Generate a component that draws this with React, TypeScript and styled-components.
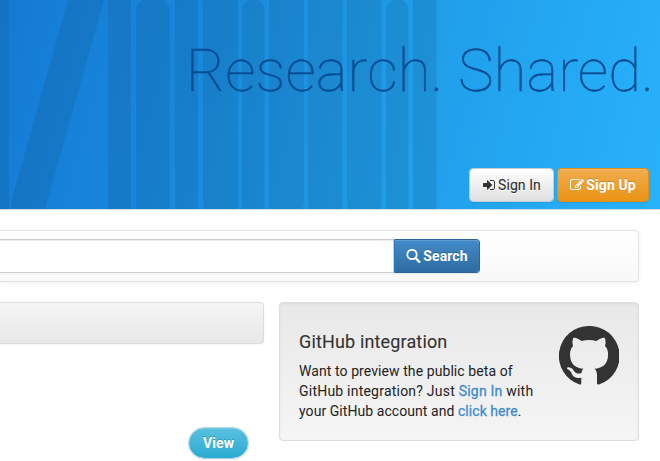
import React from "react";
import styled, { createGlobalStyle, css } from "styled-components";

const GlobalStyle = createGlobalStyle`
  * { box-sizing: border-box; }
  html, body { margin: 0; padding: 0; background: #fff; overflow: hidden; }
  body {
    font-family: Roboto, "Liberation Sans", sans-serif;
    font-size: 14px;
    line-height: 20px;
    color: #222;
  }
`;

const Page = styled.div`
  width: 660px;
  height: 461px;
  overflow: hidden;
  background: #fff;
`;

const Hero = styled.header`
  position: relative;
  height: 210px;
  padding: 37px 11px 0 0;
  display: flex;
  flex-direction: column;
  align-items: flex-end;
  border-bottom: 1px solid #d5dde3;
  background: linear-gradient(105deg, #147ad5 0%, #1887da 28%, #209eea 62%, #28b2fb 100%) padding-box;
`;

const Backdrop = styled.svg`
  position: absolute;
  left: 0;
  top: 0;
  width: 660px;
  height: 209px;
  fill: #104f70;
  fill-opacity: 0.17;
`;

const Slogan = styled.h1`
  position: relative;
  margin: 0 -5px 0 0;
  font-size: 60px;
  font-weight: 100;
  line-height: 68px;
  height: 131px;
  letter-spacing: 0.08px;
  white-space: nowrap;
  color: #004c91;
  -webkit-text-stroke: 0.4px #004c91;
`;

const HeroActions = styled.div`
  position: relative;
  display: flex;
  gap: 3px;
`;

const tones = {
  plain: css`
    color: #333;
    border-color: #c6cdd2;
    background: linear-gradient(#fff, #e0e0e0) padding-box;
    text-shadow: 0 1px 0 #fff;
    -webkit-text-stroke: 0.1px #333;
  `,
  orange: css`
    color: #fff;
    border-color: #e38d13;
    background: linear-gradient(#f0ad4e, #eb9316) padding-box;
    text-shadow: 0 -1px 0 rgba(0, 0, 0, 0.2);
  `,
  blue: css`
    color: #fff;
    border-color: #2b669a;
    border-left-color: #3577b1;
    background: linear-gradient(#428bca, #2d6ca2) padding-box;
    text-shadow: 0 -1px 0 rgba(0, 0, 0, 0.2);
  `,
  cyan: css`
    color: #fff;
    border-color: #b5d5df;
    background: linear-gradient(#5bc0de, #2aabd2) padding-box;
    text-shadow: 0 -1px 0 rgba(0, 0, 0, 0.2);
  `,
};

const Button = styled.button<{ $tone: keyof typeof tones; $width: number; $radius?: string; $bold?: boolean; $height?: number }>`
  display: flex;
  align-items: center;
  justify-content: center;
  gap: 2px;
  width: ${(p) => p.$width}px;
  height: ${(p) => p.$height ?? 34}px;
  padding: 0;
  border: 1px solid;
  border-radius: ${(p) => p.$radius ?? "4px"};
  font: ${(p) => (p.$bold ? 700 : 400)} 14px/20px Roboto, sans-serif;
  letter-spacing: 0.08px;
  white-space: nowrap;
  box-shadow: inset 0 1px 0 rgba(255, 255, 255, 0.15), 0 1px 1px rgba(0, 0, 0, 0.075);
  ${(p) => tones[p.$tone]}
`;

const Glyph = styled.svg<{ $size: number }>`
  width: ${(p) => p.$size}px;
  height: ${(p) => p.$size}px;
  flex: none;
  fill: currentColor;
`;

const SearchPanel = styled.section`
  width: 639px;
  height: 52px;
  margin-top: 20px;
  padding: 8px 0;
  display: flex;
  border: 1px solid #e5e5e5;
  border-left: 0;
  border-radius: 0 4px 4px 0;
  background: linear-gradient(#fff, #f8f8f8);
  box-shadow: 0 1px 4px rgba(0, 0, 0, 0.065);
`;

const SearchInput = styled.input`
  width: 394px;
  height: 34px;
  padding: 0;
  border: solid #ccc;
  border-width: 1px 1px 1px 0;
  background: #fff;
  box-shadow: inset 0 1px 1px rgba(0, 0, 0, 0.075);
`;

const Columns = styled.main`
  display: grid;
  grid-template-columns: 264px 360px;
  gap: 15px;
  margin-top: 20px;
`;

const Listing = styled.section`
  display: flex;
  flex-direction: column;
  align-items: flex-end;
  justify-content: space-between;
  height: 157px;
`;

const ListingHeader = styled.div`
  width: 264px;
  height: 42px;
  border: 1px solid #dcdcdc;
  border-left: 0;
  border-radius: 0 4px 4px 0;
  background: linear-gradient(#f5f5f5, #e8e8e8);
  box-shadow: 0 1px 2px rgba(0, 0, 0, 0.05);
`;

const ListingFooter = styled.div`
  padding-right: 15px;
`;

const Well = styled.aside`
  display: flex;
  justify-content: space-between;
  height: 139px;
  padding: 23px 19px 0;
  border: 1px solid #dcdcdc;
  border-radius: 4px;
  background: linear-gradient(#e8e8e8, #f5f5f5);
  box-shadow: inset 0 1px 3px rgba(0, 0, 0, 0.05), 0 1px 0 rgba(255, 255, 255, 0.1);
`;

const WellTitle = styled.h4`
  margin: 6px 0 9px;
  font-size: 18px;
  font-weight: 400;
  line-height: 20px;
  letter-spacing: 0.15px;
  color: #333;
  -webkit-text-stroke: 0.1px #333;
`;

const WellText = styled.p`
  margin: 0;
  white-space: nowrap;
`;

const Line = styled.span<{ $tracking: number }>`
  display: block;
  letter-spacing: ${(p) => p.$tracking}px;
`;

const Link = styled.a`
  color: #428bca;
  text-decoration: none;
  -webkit-text-stroke: 0.3px #428bca;
`;

const Mark = styled(Glyph)`
  color: #333;
`;

const Magnifier = styled.svg`
  width: 15px;
  height: 15px;
  flex: none;
  fill: none;
  stroke: #fff;
`;

export default function App() {
  return (
    <Page>
      <GlobalStyle />
      <Hero>
        <Backdrop viewBox="0 0 660 209">
          <path d="M0 0H9V209H0Z" />
          <path d="M68 0H104L45 209H12.500Q11 204 12 199Z" />
          <path d="M108 0H131V209H109L108 207Z" />
          <path d="M136 209V9Q137 3 143 0H163Q169 4 170 9V207L169 209Z" />
          <path d="M175 0H198V209H175Z" />
          <path d="M203 0H238V206L237 209H205L203 205Z" />
          <path d="M242 209V9Q243 3 249 0H258Q264 3 264.500 9V209Z" />
          <path d="M269 0H304V205L302 209H271L269 205Z" />
          <path d="M308 0H342.500V205L341 209H310L308 205Z" />
          <path d="M347 0H381.500V205L380 209H349L347 205Z" />
          <path d="M386 209V9Q387 3 393 0H402Q408 3 408.500 9V209Z" />
          <path d="M413 0H436.500V209H413Z" />
        </Backdrop>
        <Slogan>Research. Shared.</Slogan>
        <HeroActions>
          <Button $tone="plain" $width={85}>
            <Glyph $size={14} viewBox="0 0 1792 1792">
              <path d="M1312 896q0 26-19 45l-544 544q-19 19-45 19t-45-19-19-45v-288h-448q-26 0-45-19t-19-45v-384q0-26 19-45t45-19h448v-288q0-26 19-45t45-19 45 19l544 544q19 19 19 45zm352-352v704q0 119-84.500 203.500t-203.500 84.500h-320q-13 0-22.500-9.500t-9.500-22.500q0-4-1-20t-.5-26.500 3-23.500 10-19.500 20.500-6.500h320q66 0 113-47t47-113v-704q0-66-47-113t-113-47h-312l-11.500-1-11.500-3-8-5.500-7-9-2-13.500q0-4-1-20t-.5-26.500 3-23.500 10-19.500 20.500-6.500h320q119 0 203.500 84.500t84.500 203.500z" />
            </Glyph>
            Sign In
          </Button>
          <Button $tone="orange" $width={92} $bold>
            <Glyph $size={14} viewBox="0 0 1792 1792">
              <path d="M888 1184l116-116-152-152-116 116v56h96v96h56zm440-720q-16-16-33 1l-350 350q-17 17-1 33t33-1l350-350q17-17 1-33zm80 594v190q0 119-84.500 203.500t-203.500 84.500h-832q-119 0-203.500-84.500t-84.500-203.500v-832q0-119 84.500-203.500t203.500-84.500h832q63 0 117 25 15 7 18 23 3 17-9 29l-49 49q-14 14-32 8-23-6-45-6h-832q-66 0-113 47t-47 113v832q0 66 47 113t113 47h832q66 0 113-47t47-113v-126q0-13 9-22l64-64q15-15 35-7t20 29zm-96-738l288 288-672 672h-288v-288zm444 132l-92 92-288-288 92-92q28-28 68-28t68 28l152 152q28 28 28 68t-28 68z" />
            </Glyph>
            Sign Up
          </Button>
        </HeroActions>
      </Hero>
      <SearchPanel>
        <SearchInput aria-label="Search" />
        <Button $tone="blue" $width={86} $radius="0 4px 4px 0" $bold>
          <Magnifier viewBox="0 0 15 15">
            <circle cx="6" cy="5.500" r="4.700" strokeWidth="1.800" />
            <path d="M9.500 9L13.300 12.800" strokeWidth="2.400" strokeLinecap="round" />
          </Magnifier>
          Search
        </Button>
      </SearchPanel>
      <Columns>
        <Listing>
          <ListingHeader />
          <ListingFooter>
            <Button $tone="cyan" $width={61} $height={32} $radius="16px" $bold>View</Button>
          </ListingFooter>
        </Listing>
        <Well>
          <div>
            <WellTitle>GitHub integration</WellTitle>
            <WellText>
              <Line $tracking={0.08}>Want to preview the public beta of</Line>
              <Line $tracking={0.22}>
                GitHub integration? Just <Link>Sign In</Link> with
              </Line>
              <Line $tracking={0.06}>
                your GitHub account and <Link>click here</Link>.
              </Line>
            </WellText>
          </div>
          <Mark $size={60} viewBox="0 0 60 60">
            <path d="M30 0A30 30 0 0 0 20.500 58.500Q22.300 58.800 22.300 57V51.700C17.500 52.700 14.500 51.300 13.200 48.500C12 45.500 10.700 44.300 8.700 43.200C7.200 42 8.300 41.200 9.700 41.200C12.500 41.200 14 43.500 15 45C17 48 20 48 22.500 47C22.700 45 23.400 43.700 24.500 42.800C17.500 42 11 39.500 11 28C11 24.500 12.200 21.900 14.100 19.900C13.700 18.800 12.800 15.800 14.400 11.800C14.400 11.800 16.900 11 22.500 14.900Q30 13 37.500 14.900C43.200 11 45.700 11.800 45.700 11.800C47.300 15.800 46.300 18.800 46 19.900C47.900 21.900 49.100 24.500 49.100 28C49.100 39.500 42.500 42 35.500 42.800C37 44 38 46 38 49V57Q38 59 40 58.500A30 30 0 0 0 30 0Z" />
          </Mark>
        </Well>
      </Columns>
    </Page>
  );
}
